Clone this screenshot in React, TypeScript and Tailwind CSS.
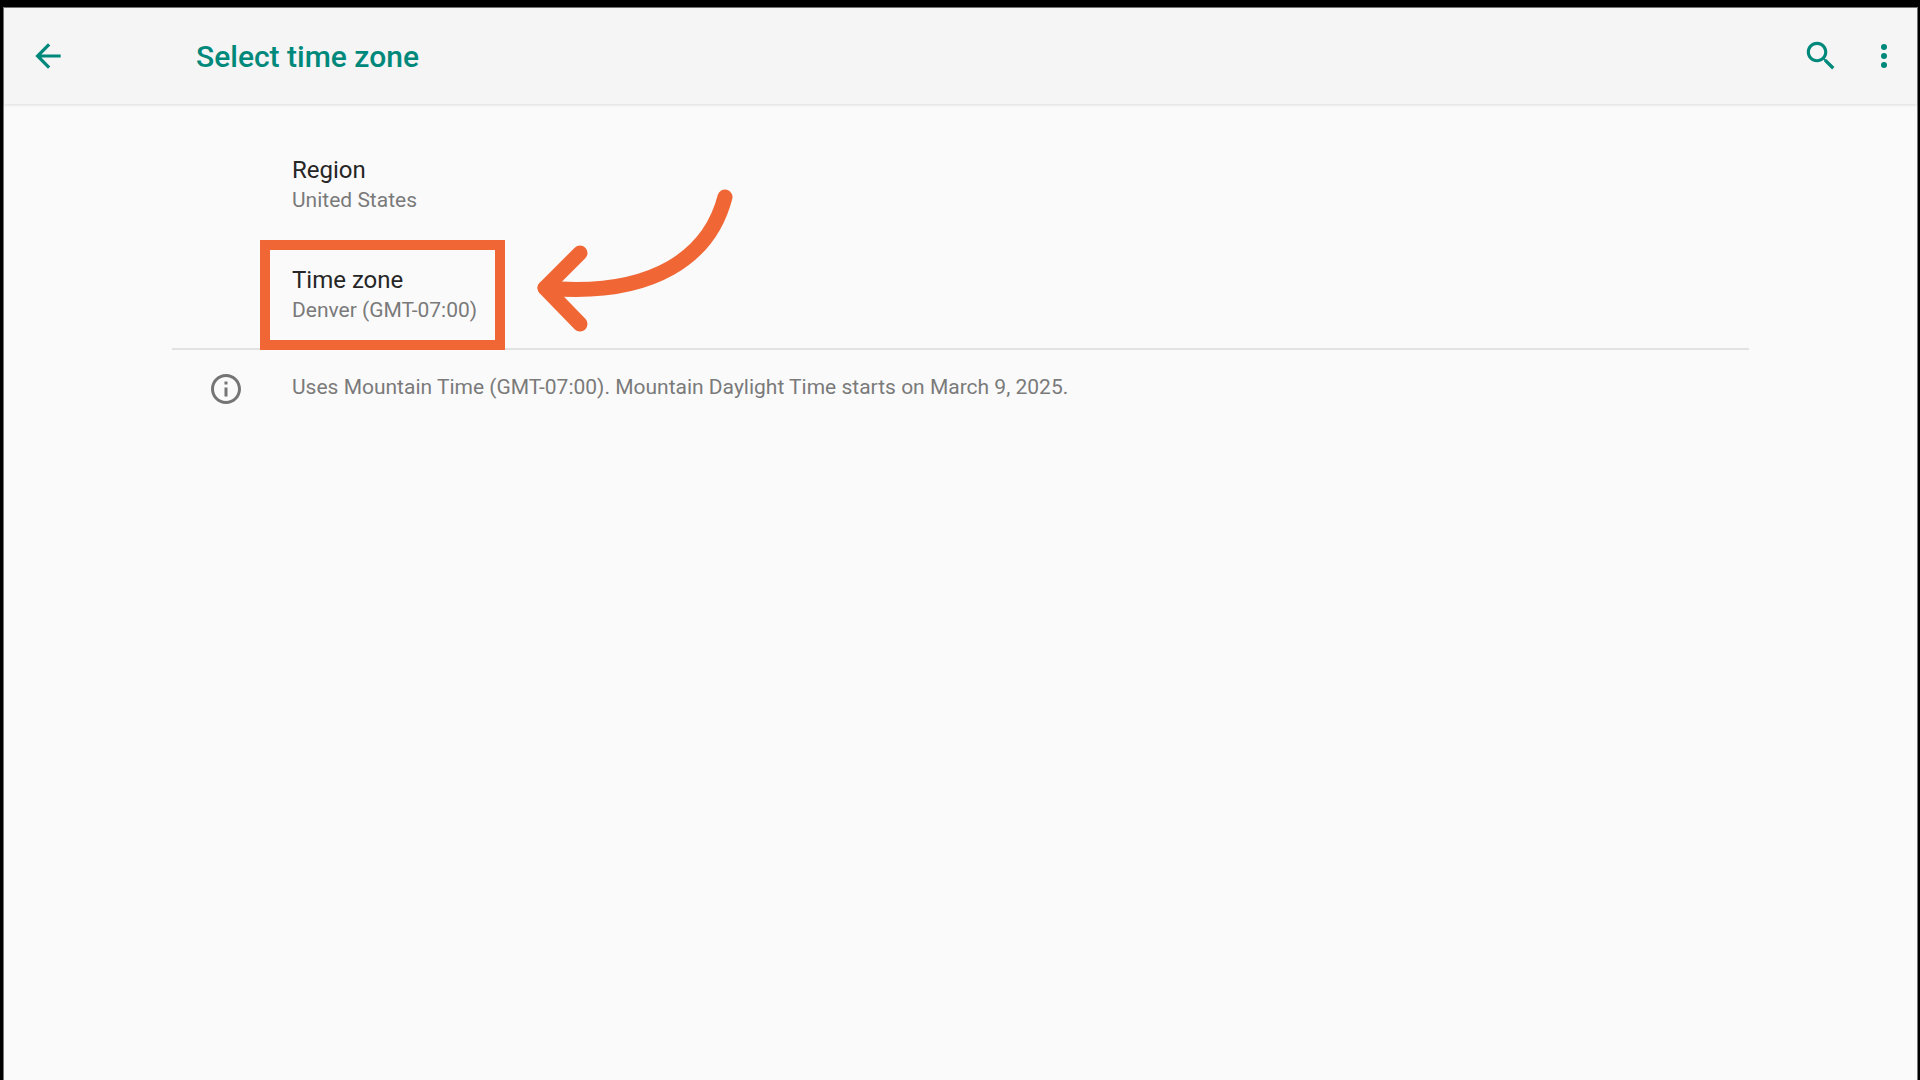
const font = { fontFamily: "Roboto, sans-serif" };

const SettingRow = ({ title, value }: { title: string; value: string }) => (
  <div className="flex h-[110px] flex-col justify-center pt-[2px] pl-[120px]">
    <div className="text-[24px] leading-[32px] text-[#262626]">{title}</div>
    <div className="text-[21px] leading-[28px] text-[#7a7a7a]">{value}</div>
  </div>
);

const App = () => {
  return (
    <div className="h-[1080px] w-[1920px] overflow-hidden bg-black pt-[7px] pr-[2px] pl-[3px]" style={font}>
      <div className="relative flex h-full flex-col border-x border-t border-solid border-[#777777] bg-[#fafafa]">
        <header className="relative flex h-[96px] shrink-0 items-center justify-between bg-[#f5f5f5] pr-[30px] pl-[25px] text-[#00897b] shadow-[0_1px_3px_rgba(0,0,0,0.12)]">
          <div className="flex items-center">
            <svg width="38" height="38" viewBox="0 0 24 24" fill="currentColor">
              <path d="M20 11H7.83l5.59-5.59L12 4l-8 8 8 8 1.41-1.41L7.83 13H20v-2z" />
            </svg>
            <h1 className="mt-[2px] ml-[129px] text-[30px] font-medium leading-none">Select time zone</h1>
          </div>
          <div className="flex items-center gap-[41px]">
            <svg width="38" height="38" viewBox="0 0 24 24" fill="currentColor">
              <path d="M15.5 14h-.79l-.28-.27C15.41 12.59 16 11.11 16 9.5 16 5.91 13.09 3 9.5 3S3 5.91 3 9.5 5.91 16 9.5 16c1.61 0 3.09-.59 4.23-1.57l.27.28v.79l5 4.99L20.49 19l-4.99-5zm-6 0C7.01 14 5 11.99 5 9.5S7.01 5 9.5 5 14 7.01 14 9.5 11.99 14 9.5 14z" />
            </svg>
            <svg width="6" height="24" viewBox="0 0 6 24" fill="currentColor">
              <circle cx="3" cy="3" r="3" />
              <circle cx="3" cy="12" r="3" />
              <circle cx="3" cy="21" r="3" />
            </svg>
          </div>
        </header>

        <main className="mx-[168px] flex flex-col pt-[24px]">
          <SettingRow title="Region" value="United States" />
          <SettingRow title="Time zone" value="Denver (GMT-07:00)" />
          <div className="h-[2px] bg-[#e2e2e2]" />
          <div className="flex items-start pt-[20px]">
            <svg width="36" height="36" viewBox="0 0 24 24" fill="#757575" className="ml-[36px] mt-[1px]">
              <path d="M11 7h2v2h-2zm0 4h2v6h-2zm1-9C6.48 2 2 6.48 2 12s4.48 10 10 10 10-4.48 10-10S17.52 2 12 2zm0 18c-4.41 0-8-3.59-8-8s3.59-8 8-8 8 3.59 8 8-3.59 8-8 8z" />
            </svg>
            <p className="mt-[3px] ml-[48px] text-[21px] leading-[28px] text-[#7a7a7a]">
              Uses Mountain Time (GMT-07:00). Mountain Daylight Time starts on March 9, 2025.
            </p>
          </div>
        </main>

        {/* annotation overlay */}
        <div className="absolute top-[232px] left-[256px] h-[110px] w-[245px] border-[10px] border-solid border-[#f06735]" />
        <svg
          className="absolute top-[172px] left-[516px]"
          width="224"
          height="172"
          viewBox="0 0 224 172"
          fill="none"
          stroke="#f06735"
          strokeWidth="15"
          strokeLinecap="round"
          strokeLinejoin="round"
        >
          <path d="M205 17 C190 75 135 118 25 108" />
          <path d="M60 73 L25 108 L60 144" />
        </svg>
      </div>
    </div>
  );
};

export default App;
